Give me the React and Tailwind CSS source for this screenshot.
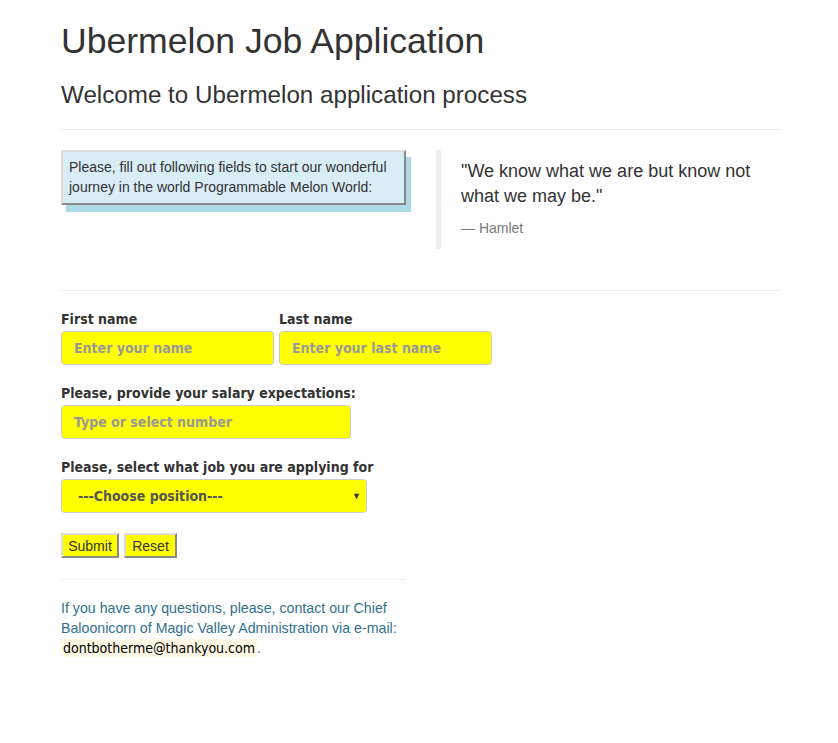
import React from 'react';

const formFont = "[font-family:'DejaVu_Sans_Condensed','DejaVu_Sans',sans-serif]";
const labelCls = `block h-[20px] leading-[20px] mb-[2px] text-[14px] font-bold text-[#333] ${formFont}`;
const inputCls = `block h-[34px] px-[12px] bg-[#ffff00] border border-[#ccc] rounded-[4px] text-[14px] font-bold text-[#555] placeholder:text-[#999] outline-none ${formFont}`;
const btnCls = "bg-[#ffff00] border-2 [border-style:outset] border-[#ddd] px-[5px] h-[25px] text-[14px] leading-[20px] text-[#333]";

export default function App() {
    return (
        <div className="min-h-[743px] bg-white text-[#333] [font-family:'Liberation_Sans',Arial,sans-serif]">
            <div className="ml-[61px] w-[720px]">
                <h1 className="pt-[21px] text-[35.6px] leading-[40px] font-normal">Ubermelon Job Application</h1>
                <h3 className="mt-[21px] text-[24.2px] leading-[26px] font-normal">Welcome to Ubermelon application process</h3>
                <hr className="mt-[21px] border-0 border-t border-[#eee]" />

                <div className="mt-[20px] flex">
                    <div className="w-[375px] pr-[30px]">
                        <div className="bg-[#d9edf7] border-2 [border-style:outset] border-[#ddd] px-[6px] pt-[5px] pb-[6px] text-[14px] leading-[20px] text-[#333] shadow-[5px_7px_0_#add8e6]">
                            Please, fill out following fields to start our wonderful journey in the world Programmable Melon World:
                        </div>
                    </div>
                    <blockquote className="w-[345px] border-l-[5px] border-[#eee] px-[20px] pt-[9px] pb-[11px]">
                        <p className="text-[18px] leading-[25px] mb-[9px]">"We know what we are but know not what we may be."</p>
                        <footer className="text-[14px] leading-[20px] text-[#777]">— Hamlet</footer>
                    </blockquote>
                </div>

                <hr className="mt-[41px] border-0 border-t border-[#eee]" />

                <form className="pt-[18px]" onSubmit={(e) => e.preventDefault()}>
                    <div className="flex gap-[5px]">
                        <div>
                            <label className={labelCls}>First name</label>
                            <input className={`${inputCls} w-[213px]`} placeholder="Enter your name" />
                        </div>
                        <div>
                            <label className={labelCls}>Last name</label>
                            <input className={`${inputCls} w-[213px]`} placeholder="Enter your last name" />
                        </div>
                    </div>

                    <div className="mt-[18px]">
                        <label className={labelCls}>Please, provide your salary expectations:</label>
                        <input className={`${inputCls} w-[290px]`} placeholder="Type or select number" />
                    </div>

                    <div className="mt-[18px]">
                        <label className={labelCls}>Please, select what job you are applying for</label>
                        <div className="relative w-[306px]">
                            <select className={`${inputCls} w-[306px] appearance-none pl-[16px] text-[#333]`} defaultValue="">
                                <option value="">---Choose position---</option>
                            </select>
                            <span className="absolute right-[6px] top-[10px] text-[9px] leading-[14px] text-[#333] pointer-events-none">▼</span>
                        </div>
                    </div>

                    <div className="mt-[20px] flex gap-[5px]">
                        <button type="submit" className={`${btnCls} w-[58px]`}>Submit</button>
                        <button type="reset" className={`${btnCls} w-[53px]`}>Reset</button>
                    </div>
                </form>

                <hr className="mt-[21px] w-[345px] border-0 border-t border-[#eee]" />

                <p className="mt-[18px] w-[345px] text-[14.2px] leading-[20px] text-[#31708f]">
                    If you have any questions, please, contact our Chief Baloonicorn of Magic Valley Administration via e-mail:{' '}
                    <mark className={`bg-[#fcf8e3] px-[2px] py-[1px] text-black text-[14px] ${formFont}`}>dontbotherme@thankyou.com</mark>.
                </p>
            </div>
        </div>
    );
}
